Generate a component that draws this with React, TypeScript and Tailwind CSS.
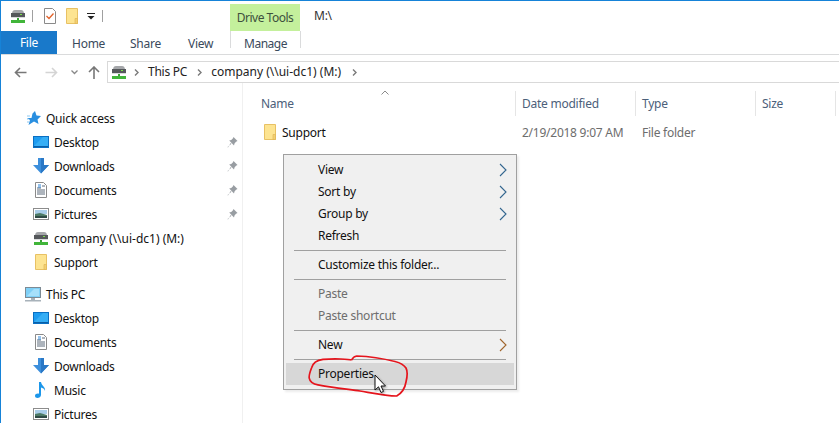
const DriveIcon = () => (
  <svg width="16" height="15" viewBox="0 0 16 15">
    <path d="M2 5 Q2 1 5 1 H11 Q14 1 14 5 V8 H2Z" fill="#a4a6a9" />
    <rect x="1" y="4" width="14" height="4" fill="#55585b" />
    <rect x="10" y="5" width="2" height="1" fill="#7be04a" />
    <rect x="1" y="8" width="14" height="1" fill="#d8dadb" />
    <rect x="7" y="9" width="2" height="2" fill="#3aa335" />
    <rect x="1" y="11" width="14" height="3" fill="#41b53a" />
  </svg>
);

const FolderIcon = ({ w = 12, h = 16 }: { w?: number; h?: number }) => (
  <svg width={w} height={h} viewBox="0 0 12 16">
    <path d="M0.5 0.5 H11.5 V15.5 H0.5Z" fill="#fde491" stroke="#e8c164" />
    <path d="M9 10.5 H11.5 V15.5 H9Z" fill="#f3cf72" stroke="#e0b858" strokeWidth="0.7" />
  </svg>
);

const DesktopIcon = () => (
  <svg width="16" height="12" viewBox="0 0 16 12">
    <rect width="16" height="12" fill="#0a6fc2" />
    <path d="M1 1 H15 V10 H1Z" fill="#1e9cf0" />
    <path d="M1 10 L10 1 H15 V10Z" fill="#36aef5" />
    <rect x="1" y="10" width="14" height="1" fill="#0a5ea6" />
  </svg>
);

const DownloadIcon = () => (
  <svg width="16" height="16" viewBox="0 0 16 16">
    <path d="M5 0 H11 V7 H16 L8 15.5 L0 7 H5Z" fill="#3c8fdc" />
    <path d="M8 0 H11 V7 H16 L8 15.5Z" fill="#2a78c6" />
  </svg>
);

const DocIcon = () => (
  <svg width="12" height="16" viewBox="0 0 12 16">
    <path d="M0.5 0.5 H8.5 L11.5 3.5 V15.5 H0.5Z" fill="#fff" stroke="#8a8a8a" />
    <path d="M2 6 H6M7 4 H10M2 8 H10M2 10 H10M2 12 H10" stroke="#5c6b7a" />
    <path d="M3 3 H6 M3 5 H6" stroke="#2e86d8" />
  </svg>
);

const PictureIcon = () => (
  <svg width="16" height="12" viewBox="0 0 16 12">
    <rect x="0.5" y="0.5" width="15" height="11" fill="#fff" stroke="#8c8c8c" />
    <rect x="2" y="2" width="12" height="4" fill="#a9cde8" />
    <path d="M2 6 L7 5 L14 7 V10 H2Z" fill="#4c7a66" />
    <rect x="2" y="8" width="12" height="2" fill="#2f4a45" />
  </svg>
);

const MusicIcon = () => (
  <svg width="12" height="16" viewBox="0 0 12 16">
    <path d="M4 0 H6 C6.5 4 11 5 10 9 C9.5 6.5 7.5 6 6 5.5 V13 C6 15 4 16 2.5 16 C1 16 0 15 0 13.7 C0 12 2.5 11 4 11.7Z" fill="#1c97ea" />
  </svg>
);

const StarIcon = () => (
  <svg width="16" height="15" viewBox="0 0 16 15">
    <path d="M10 0 L11.5 4.5 L16 5 L12.5 8.5 L13.5 13 L9 10.5 L3.5 14 L5 9 L2 7 H6.5 L7.5 2.5Z" fill="#2a8fe0" />
    <path d="M2 5 H5 M2 8 H3.5 M2 11 H4" stroke="#8cc8f2" strokeWidth="1" />
  </svg>
);

const PcIcon = () => (
  <svg width="16" height="15" viewBox="0 0 16 15">
    <rect x="0.5" y="0.5" width="15" height="10" fill="#7fd0f7" stroke="#7d8a94" />
    <path d="M2 9 L9 2 H14 V9Z" fill="#a6e0fb" />
    <rect x="6" y="11" width="4" height="2" fill="#a8b2ba" />
    <rect x="0" y="13" width="16" height="1.5" fill="#a8b2ba" />
  </svg>
);

const PinIcon = () => (
  <svg width="11" height="11" viewBox="0 0 10 11">
    <path d="M6 0 L10 4 L8.5 4.7 L7 6.5 L6.5 8.5 L1.7 3.5 L3.7 3 L5.3 1.5Z M3.2 6 L0.5 10.5 L0 10 L4 6.8Z" fill="#989da2" />
  </svg>
);

const Chevron = ({ color = '#7a7a7a' }: { color?: string }) => (
  <svg width="5" height="7" viewBox="0 0 5 7">
    <path d="M1 0.5 L4 3.5 L1 6.5" fill="none" stroke={color} strokeWidth="1.4" />
  </svg>
);

const NavRow = ({
  icon,
  label,
  pinned,
  top,
  wide,
}: {
  icon: React.ReactNode;
  label: string;
  pinned?: boolean;
  top?: boolean;
  wide?: boolean;
}) => (
  <div className={`flex h-6 items-center ${top ? 'pl-[24px]' : 'pl-[32px]'}`}>
    <div className="flex h-4 w-[16px] items-center justify-center">{icon}</div>
    <span className={`ml-[5px] whitespace-nowrap pt-px text-[#111] ${wide ? 'tracking-normal' : ''}`}>{label}</span>
    {pinned && (
      <span className="ml-auto mr-[4px]">
        <PinIcon />
      </span>
    )}
  </div>
);

const HeaderCell = ({ label, className }: { label: string; className: string }) => (
  <div className={`flex h-[25px] items-center border-r border-[#e5e5e5] pl-[6px] text-[#4c607a] ${className}`}>{label}</div>
);

const MenuItem = ({
  label,
  arrow,
  disabled,
  active,
}: {
  label: string;
  arrow?: string;
  disabled?: boolean;
  active?: boolean;
}) => (
  <div className={`mx-[2px] flex h-[22px] items-center justify-between pl-[32px] pr-[7px] ${active ? 'bg-[#d7d7d7]' : ''} ${disabled ? 'text-[#6d6d6d]' : 'text-[#111]'}`}>
    <span>{label}</span>
    {arrow && (
      <svg width="8" height="14" viewBox="0 0 8 14">
        <path d="M1 1 L7 7 L1 13" fill="none" stroke={arrow} strokeWidth="1.1" />
      </svg>
    )}
  </div>
);

const MenuSep = () => <div className="mx-[10px] my-[3px] h-px bg-[#a0a0a0]" />;

export default function App() {
  return (
    <div className="relative h-[423px] w-[839px] overflow-hidden border-l border-t border-[#1683d8] bg-white font-['Noto_Sans',sans-serif] text-[12px] tracking-[-0.25px]">
      {/* title bar */}
      <div className="flex h-[30px] items-center pl-[9px]">
        <DriveIcon />
        <div className="ml-[6px] h-[12px] w-px bg-[#a0a0a0]" />
        <div className="ml-[11px] flex h-4 w-[12px] items-center justify-center">
          <svg width="12" height="16" viewBox="0 0 12 16">
            <path d="M0.5 0.5 H8.5 L11.5 3.5 V15.5 H0.5Z" fill="#fff" stroke="#8a8a8a" />
            <path d="M2.5 8 L5 10.5 L9.5 5.5" fill="none" stroke="#e2622a" strokeWidth="1.3" />
          </svg>
        </div>
        <div className="ml-[10px]">
          <FolderIcon />
        </div>
        <svg className="ml-[9px]" width="8" height="7" viewBox="0 0 8 7">
          <rect width="8" height="1" fill="#222" />
          <path d="M0.5 3 H7.5 L4 6.5Z" fill="#222" />
        </svg>
        <div className="ml-[7px] h-[12px] w-px bg-[#a0a0a0]" />
        <div className="ml-[127px] mt-[3px] flex h-[27px] w-[70px] items-center justify-center bg-[#c4f09c] tracking-[-0.5px] text-[#3d4f3d]">Drive Tools</div>
        <span className="ml-[14px] text-[#333]">M:\</span>
      </div>

      {/* ribbon tabs */}
      <div className="flex h-[24px] items-start border-b border-[#dadbdc] text-[#3a4a5c]">
        <div className="flex h-[23px] w-[56px] items-center justify-center bg-[#1979ca] pt-px text-white">File</div>
        <span className="ml-[15px] w-[58px] pt-[4px]">Home</span>
        <span className="w-[58px] pt-[4px]">Share</span>
        <span className="w-[42px] pt-[4px]">View</span>
        <div className="flex h-[17px] w-[71px] justify-center border-x border-[#dadbdc] pt-[4px] tracking-[-0.5px]">Manage</div>
      </div>

      {/* address row */}
      <div className="flex h-[28px] items-center pt-[6px]">
        <svg className="ml-[13px]" width="13" height="11" viewBox="0 0 13 11">
          <path d="M6 1 L1.5 5.5 L6 10 M1.5 5.5 H12.5" fill="none" stroke="#777" strokeWidth="1.6" />
        </svg>
        <svg className="ml-[18px]" width="13" height="11" viewBox="0 0 13 11">
          <path d="M7 1 L11.5 5.5 L7 10 M11.5 5.5 H0.5" fill="none" stroke="#d4d4d4" strokeWidth="1.6" />
        </svg>
        <svg className="ml-[13px]" width="7" height="5" viewBox="0 0 7 5">
          <path d="M0.5 0.5 L3.5 3.5 L6.5 0.5" fill="none" stroke="#888" strokeWidth="1.3" />
        </svg>
        <svg className="ml-[10px]" width="12" height="13" viewBox="0 0 12 13">
          <path d="M1 6 L6 1 L11 6 M6 1 V13" fill="none" stroke="#777" strokeWidth="1.6" />
        </svg>
        <div className="ml-[7px] flex h-[22px] flex-1 items-center border-y border-l border-[#d9d9d9] pl-[3px] text-[#222]">
          <DriveIcon />
          <span className="ml-[7px]">
            <Chevron />
          </span>
          <span className="ml-[9px]">This PC</span>
          <span className="ml-[10px]">
            <Chevron />
          </span>
          <span className="ml-[9px] tracking-normal">company (\\ui-dc1) (M:)</span>
          <span className="ml-[11px]">
            <Chevron />
          </span>
        </div>
      </div>

      <div className="flex">
        {/* nav pane */}
        <div className="h-[340px] w-[242px] shrink-0 overflow-hidden border-r border-[#f0f0f0] pt-[23px]">
          <NavRow top icon={<StarIcon />} label="Quick access" />
          <NavRow pinned icon={<DesktopIcon />} label="Desktop" />
          <NavRow pinned icon={<DownloadIcon />} label="Downloads" />
          <NavRow pinned icon={<DocIcon />} label="Documents" />
          <NavRow pinned icon={<PictureIcon />} label="Pictures" />
          <NavRow wide icon={<DriveIcon />} label="company (\\ui-dc1) (M:)" />
          <NavRow icon={<FolderIcon />} label="Support" />
          <div className="h-2" />
          <NavRow top icon={<PcIcon />} label="This PC" />
          <NavRow icon={<DesktopIcon />} label="Desktop" />
          <NavRow icon={<DocIcon />} label="Documents" />
          <NavRow icon={<DownloadIcon />} label="Downloads" />
          <NavRow icon={<MusicIcon />} label="Music" />
          <NavRow icon={<PictureIcon />} label="Pictures" />
        </div>

        {/* file list */}
        <div className="flex-1 pt-[8px]">
          <div className="flex">
            <HeaderCell label="Name" className="ml-[12px] w-[261px]" />
            <HeaderCell label="Date modified" className="w-[120px]" />
            <HeaderCell label="Type" className="w-[120px]" />
            <HeaderCell label="Size" className="w-[80px]" />
          </div>
          <div className="mt-[4px] flex h-[24px] items-center">
            <div className="ml-[21px] flex h-4 w-[12px] items-center">
              <FolderIcon />
            </div>
            <span className="ml-[6px] w-[240px] pt-px text-[#111]">Support</span>
            <span className="w-[120px] pt-px text-[#6d6d6d]">2/19/2018 9:07 AM</span>
            <span className="pt-px text-[#6d6d6d]">File folder</span>
          </div>
        </div>
      </div>

      {/* sort caret */}
      <svg className="absolute left-[380px] top-[89px]" width="8" height="5" viewBox="0 0 8 5">
        <path d="M0.5 4.5 L4 1 L7.5 4.5" fill="none" stroke="#8a8a8a" />
      </svg>

      {/* context menu */}
      <div className="absolute left-[282px] top-[153px] h-[236px] w-[234px] border border-[#a0a0a0] bg-[#f0f0f0] pt-[4px] shadow-[2px_2px_2px_rgba(0,0,0,0.08)]">
        <MenuItem label="View" arrow="#33668f" />
        <MenuItem label="Sort by" arrow="#33668f" />
        <MenuItem label="Group by" arrow="#33668f" />
        <MenuItem label="Refresh" />
        <MenuSep />
        <MenuItem label="Customize this folder..." />
        <MenuSep />
        <MenuItem disabled label="Paste" />
        <MenuItem disabled label="Paste shortcut" />
        <MenuSep />
        <MenuItem label="New" arrow="#a0652c" />
        <MenuSep />
        <MenuItem active label="Properties" />
      </div>

      {/* red annotation */}
      <svg className="absolute left-[307px] top-[354px]" width="102" height="46" viewBox="308 355 102 46">
        <path
          d="M351.7 360 C349 359 335 358.5 323 359.3 C317 360 313 362 311.5 368 C310 372 308.5 376 309.3 378.3 C310 382 313 384 318 384.8 C330 387 346 389 360 391 C372 393 386 396 396.7 396 C402 393 405 388 406 382 C407.5 376 408 372 406 368 C404 365 401 363 395 361.5 C385 359 370 356.5 356.7 356 C353 356.5 352.5 358.5 351.7 360"
          fill="none"
          stroke="#e5141c"
          strokeWidth="1.7"
        />
      </svg>

      {/* mouse cursor */}
      <svg className="absolute left-[373px] top-[373px] drop-shadow-[1px_1px_1px_rgba(0,0,0,0.35)]" width="14" height="21" viewBox="0 0 14 21">
        <path d="M1 1 V16 L4.5 12.8 L7 18.5 L9.5 17.4 L7 12 H11.5Z" fill="#fff" stroke="#111" strokeWidth="1" />
      </svg>
    </div>
  );
}
